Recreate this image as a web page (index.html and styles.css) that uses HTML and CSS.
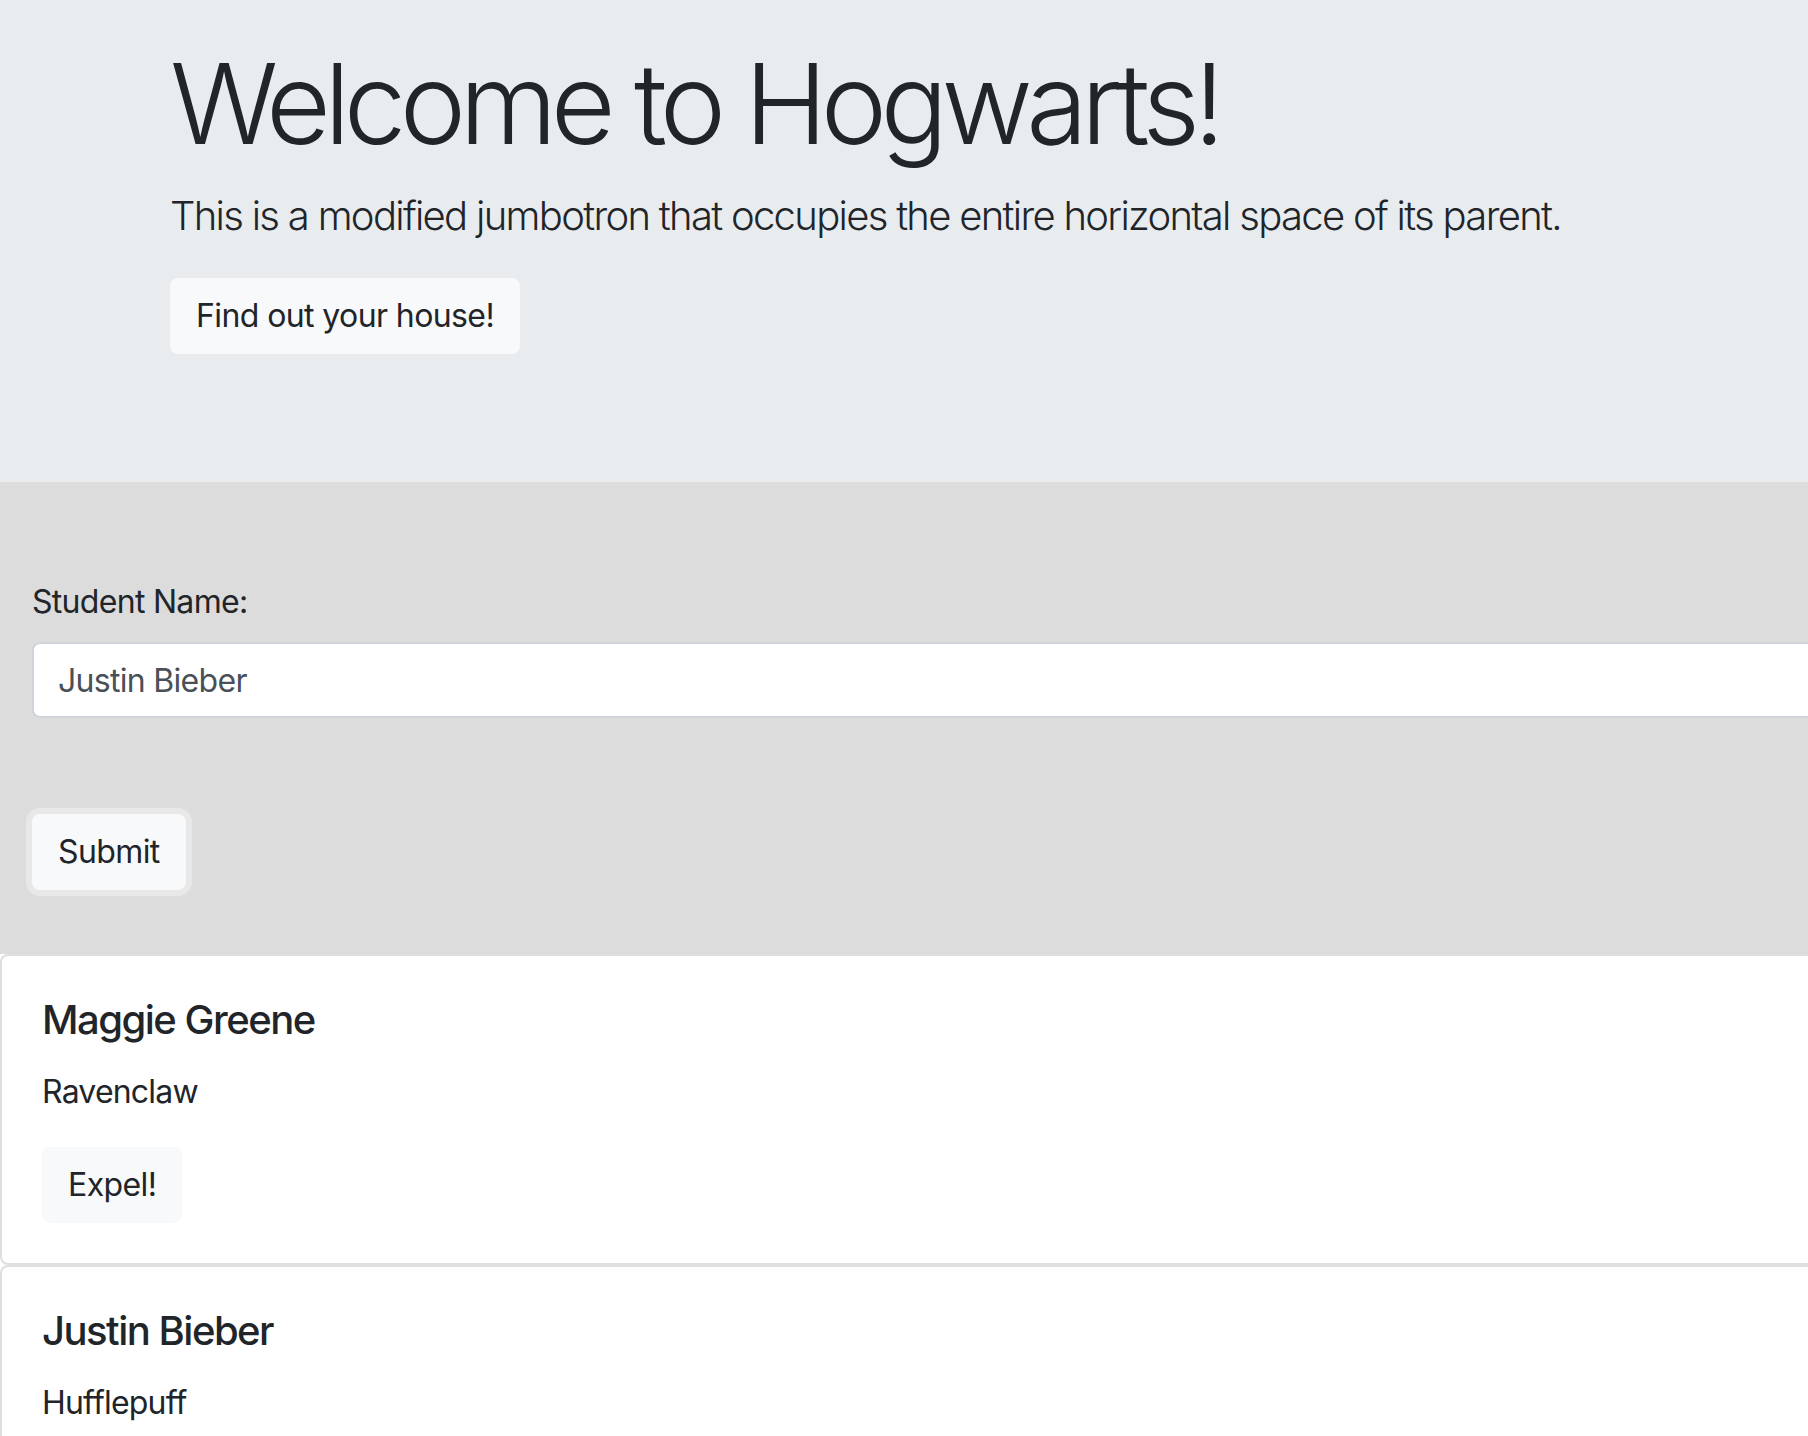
FILE: index.html
```html
<!DOCTYPE html>
<html lang="en">
<head>
<meta charset="utf-8">
<title>Hogwarts</title>
<link rel="stylesheet" href="styles.css">
</head>
<body>
<div class="page">
  <div class="jumbotron">
    <div class="container">
      <h1 class="display">Welcome to Hogwarts!</h1>
      <p class="lead">This is a modified jumbotron that occupies the entire horizontal space of its parent.</p>
      <div class="btn-row"><button class="btn btn-light" type="button">Find out your house!</button></div>
    </div>
  </div>
  <div class="form-section">
    <form class="student-form">
      <div class="form-group">
        <label class="form-label" for="name">Student Name:</label>
        <input class="form-control" id="name" type="text" value="Justin Bieber">
      </div>
      <div class="btn-row"><button class="btn btn-light btn-focus" type="button">Submit</button></div>
    </form>
  </div>
  <div class="cards">
    <div class="card">
      <div class="card-body">
        <h5 class="card-title">Maggie Greene</h5>
        <p class="card-text">Ravenclaw</p>
        <div class="btn-row"><button class="btn btn-light" type="button">Expel!</button></div>
      </div>
    </div>
    <div class="card">
      <div class="card-body">
        <h5 class="card-title">Justin Bieber</h5>
        <p class="card-text">Hufflepuff</p>
        <div class="btn-row"><button class="btn btn-light" type="button">Expel!</button></div>
      </div>
    </div>
  </div>
</div>
</body>
</html>
```

FILE: styles.css
```css
* { box-sizing: border-box; }
html, body {
  margin: 0;
  padding: 0;
  background: #ffffff;
}
body {
  font-family: Inter, "Liberation Sans", sans-serif;
  font-size: 32px;
  line-height: 1.5;
  color: #212529;
  letter-spacing: -0.7px;
}
.page {
  width: 100%;
  overflow: hidden;
}
.jumbotron {
  background: #e9ecef;
  padding: 36px 0 128px 170px;
}
.display {
  margin: 0 0 16px;
  font-size: 112px;
  font-weight: 300;
  line-height: 1.2;
  letter-spacing: -6.6px;
}
.lead {
  margin: 0 0 32px;
  font-size: 40px;
  font-weight: 300;
  line-height: 1.5;
  letter-spacing: -1.7px;
}
.btn-row {
  display: flex;
}
.btn {
  display: block;
  font-family: inherit;
  font-size: 32px;
  font-weight: 400;
  line-height: 48px;
  letter-spacing: -0.6px;
  padding: 12px 24px;
  border: 2px solid transparent;
  border-radius: 8px;
  color: #212529;
  cursor: pointer;
}
.btn-light {
  background: #f8f9fa;
  border-color: #f8f9fa;
}
.btn-focus {
  box-shadow: 0 0 0 6px #e8e8e8;
}
.form-section {
  background: #dcdcdc;
  padding: 96px 0 64px 32px;
}
.form-group {
  margin-bottom: 96px;
}
.form-label {
  display: block;
  margin-bottom: 16px;
}
.form-control {
  display: block;
  width: calc(100% + 40px);
  height: 76px;
  padding: 12px 24px;
  font-family: inherit;
  font-size: 32px;
  line-height: 48px;
  letter-spacing: -0.7px;
  color: #495057;
  background: #ffffff;
  border: 2px solid #ced4da;
  border-radius: 8px;
}
.cards {
  display: flex;
  flex-direction: column;
}
.card {
  width: calc(100% + 20px);
  background: #ffffff;
  border: 2px solid rgba(0, 0, 0, 0.125);
  border-radius: 8px;
}
.card-body {
  padding: 40px;
}
.card-title {
  margin: 0 0 24px;
  font-size: 40px;
  font-weight: 500;
  line-height: 1.2;
  letter-spacing: -1.5px;
}
.card-text {
  margin: 0 0 31px;
  letter-spacing: -0.8px;
}
```
